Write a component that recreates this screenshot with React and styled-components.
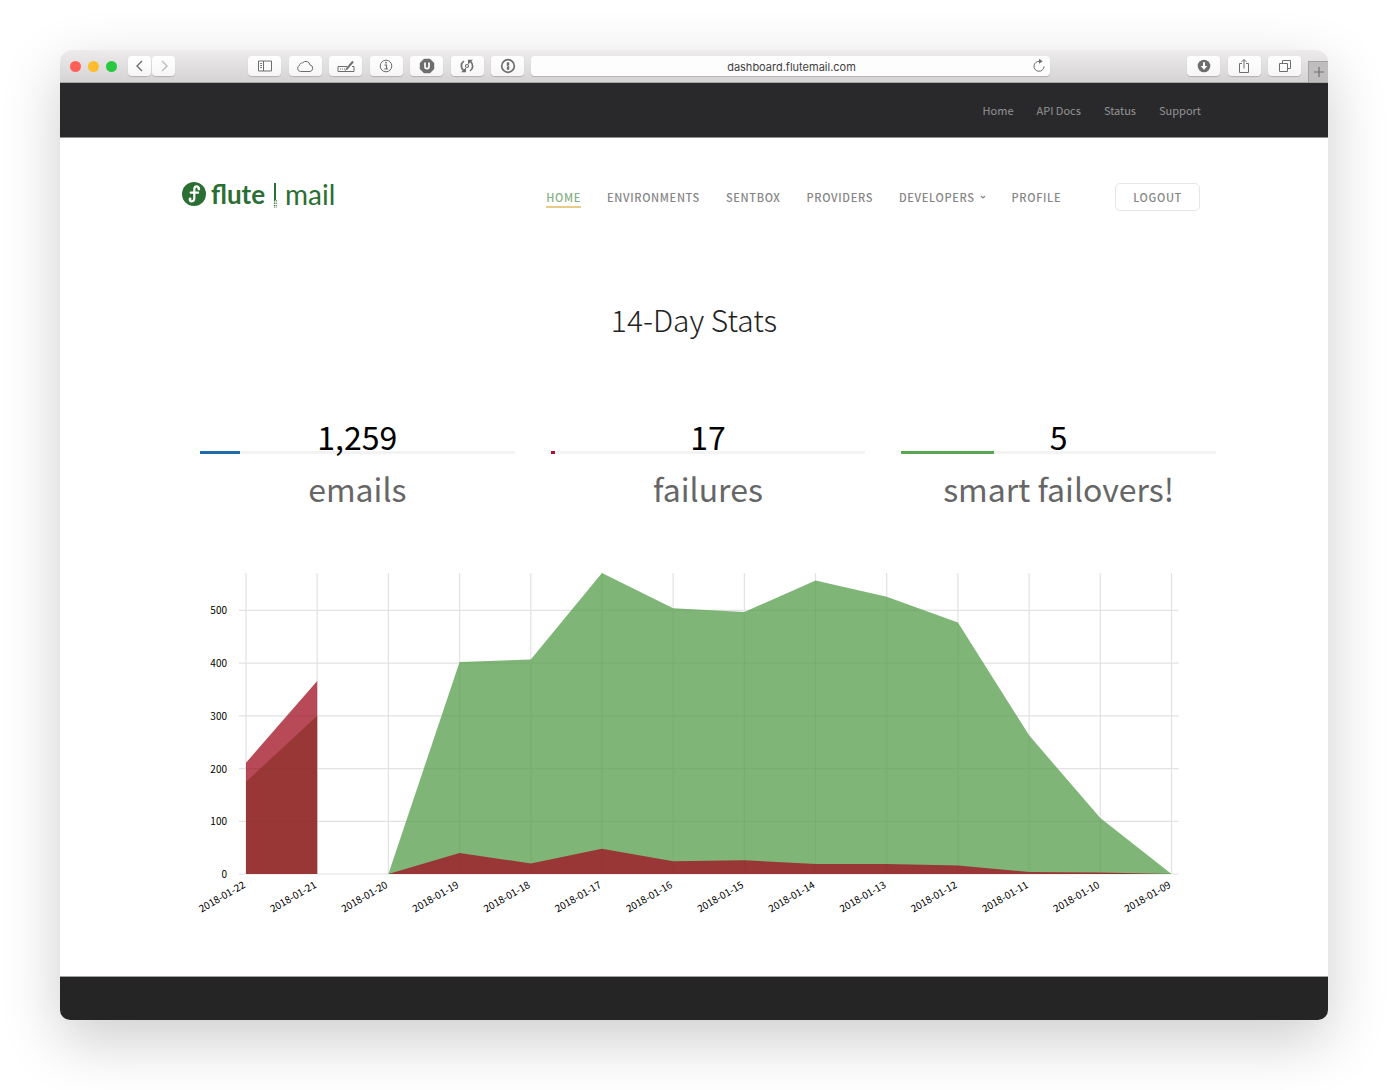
import React from "react";
import styled, { createGlobalStyle } from "styled-components";

const sans = `"Noto Sans CJK SC", "Noto Sans", sans-serif`;

const GlobalStyle = createGlobalStyle`
  *, *::before, *::after { box-sizing: border-box; }
  body { margin: 0; background: #fff; font-family: ${sans}; color: #222; }
  a { color: inherit; text-decoration: none; }
  button, input { font: inherit; color: inherit; margin: 0; }
`;

const Desktop = styled.div`
  padding: 50px 60px 70px;
`;

const Window = styled.div`
  border-radius: 12px 12px 10px 10px;
  overflow: hidden;
  background: #fff;
  box-shadow: 0 20px 60px rgba(0, 0, 0, 0.2);
`;

const Toolbar = styled.div`
  display: flex;
  align-items: center;
  height: 33px;
  padding-left: 10px;
  border-bottom: 1px solid #a3a9a5;
  background: linear-gradient(#edebec, #d5d3d4);
`;

const Lights = styled.div`
  display: flex;
  gap: 7px;
  margin-right: 11px;
`;

const Light = styled.span`
  width: 11px;
  height: 11px;
  border-radius: 50%;
  background: ${(p) => p.$color};
`;

const ToolButton = styled.button`
  display: flex;
  align-items: center;
  justify-content: center;
  width: ${(p) => (p.$narrow ? "23px" : "33px")};
  height: 20px;
  padding: 0;
  border: 0;
  border-radius: 4px;
  background: linear-gradient(#fff, #f6f6f6);
  box-shadow: 0 1px 1px rgba(0, 0, 0, 0.18);
  color: ${(p) => (p.$faded ? "#bdbdbd" : "#6e6e6e")};
`;

const History = styled.div`
  display: flex;
  gap: 1px;
  margin-right: 73px;
`;

const ToolGroup = styled.div`
  display: flex;
  justify-content: space-between;
  width: ${(p) => p.$width};
`;

const AddressBar = styled.form`
  display: flex;
  flex: 1;
  min-width: 120px;
  height: 20px;
  margin: 0 137px 0 7px;
  border-radius: 4px;
  background: #fdfdfd;
  box-shadow: 0 1px 1px rgba(0, 0, 0, 0.18);
`;

const Address = styled.input`
  flex: 1;
  min-width: 0;
  height: 20px;
  padding: 1px 0 0 24px;
  border: 0;
  background: transparent;
  font: 11px/20px Inter, sans-serif;
  text-align: center;
  color: #3f3f3f;
`;

const Reload = styled.button`
  display: flex;
  align-items: center;
  justify-content: center;
  width: 22px;
  padding: 0;
  border: 0;
  background: transparent;
  color: #6e6e6e;
`;

const NewTab = styled.button`
  display: flex;
  align-items: center;
  justify-content: center;
  align-self: flex-end;
  width: 20px;
  height: 21px;
  margin-left: 7px;
  padding: 0;
  border: 1px solid #a5a3a4;
  border-width: 1px 0 0 1px;
  background: #bfbdbe;
  color: #737172;
`;

const UtilityBar = styled.nav`
  display: flex;
  justify-content: flex-end;
  align-items: center;
  gap: 23px;
  height: 55px;
  padding-right: 127px;
  border-bottom: 1px solid #8f8f90;
  background: #29292b;
  font-size: 11px;
  line-height: 18px;
  color: #949494;
`;

const Header = styled.header`
  display: flex;
  align-items: center;
  justify-content: space-between;
  padding: 40px 128px 38px 122px;
`;

const Logo = styled.a`
  display: flex;
  align-items: center;
  gap: 5px;
  height: 32px;
  margin-bottom: 6px;
  color: #2b6e33;
  font-family: Lato, sans-serif;
  line-height: 32px;
`;

const LogoWord = styled.span`
  font-size: ${(p) => (p.$bold ? "26px" : "28px")};
  font-weight: ${(p) => (p.$bold ? 700 : 400)};
`;

const MainNav = styled.nav`
  display: flex;
  align-items: center;
  gap: 26px;
  font-size: 11px;
  line-height: 18px;
  font-weight: 500;
  letter-spacing: 0.06em;
  color: #858585;
`;

const NavLink = styled.a`
  display: flex;
  align-items: center;
  gap: 5px;
  padding-top: 2px;
  border-bottom: 2px solid ${(p) => (p.$active ? "#e9cb88" : "transparent")};
  color: ${(p) => (p.$active ? "#86af86" : "inherit")};
`;

const Logout = styled.button`
  height: 28px;
  margin-left: 28px;
  padding: 0 17px;
  border: 1px solid #e6e6e6;
  border-radius: 5px;
  background: #fff;
  letter-spacing: inherit;
  line-height: 18px;
`;

const Title = styled.h1`
  margin: 0;
  padding-top: 41px;
  font-size: 30px;
  line-height: 48px;
  font-weight: 300;
  text-align: center;
`;

const Stats = styled.section`
  display: grid;
  grid-template-columns: repeat(3, 1fr);
  gap: 36px;
  padding: 69px 112px 0 140px;
`;

const Stat = styled.div`
  display: flex;
  flex-direction: column;
  text-align: center;
  font-size: 32px;
`;

const StatValue = styled.strong`
  position: relative;
  z-index: 1;
  margin-bottom: -9px;
  font-weight: 400;
  line-height: 48px;
  color: #000;
`;

const Track = styled.div`
  height: 3px;
  background: #f3f3f3;
`;

const Fill = styled.div`
  height: 3px;
  background: ${(p) => p.$color};
`;

const StatLabel = styled.span`
  padding-top: 10px;
  line-height: 48px;
  color: #666;
`;

const ChartSection = styled.section`
  padding: 60px 112px 44px 140px;
`;

const Chart = styled.svg`
  display: block;
  width: 100%;
  height: auto;
  overflow: visible;
  font-family: ${sans};
  font-size: 10px;
  fill: #000;
`;

const Footer = styled.footer`
  height: 44px;
  border-top: 1px solid #9da3a0;
  background: #252525;
`;

function Icon({ w = 16, h = 16, children }) {
  return (
    <svg width={w} height={h} viewBox={`0 0 ${w} ${h}`} fill="none" stroke="currentColor" aria-hidden="true">
      {children}
    </svg>
  );
}

const icons = {
  back: <Icon><path d="M10 3 5 8l5 5" strokeWidth="1.4" /></Icon>,
  forward: <Icon><path d="M6 3l5 5-5 5" strokeWidth="1.4" /></Icon>,
  sidebar: <Icon><path d="M1.5 3h13v10h-13zM6.5 3v10" /><path d="M3 5.5h2M3 7.5h2M3 9.5h2" strokeWidth=".9" /></Icon>,
  cloud: <Icon w={18}><path d="M4.5 13.5A3.200 3.200 0 0 1 3.500 7.400 2.500 2.500 0 0 1 6.500 5 4.200 4.200 0 0 1 14 7 3.300 3.300 0 0 1 14 13.500z" /></Icon>,
  write: <Icon w={20}><path d="M11 8.500H2v5h16v-5h-2" /><path d="M4 11h5" strokeDasharray="1 1" /><path d="M10.500 11.200 17 3.500" strokeWidth="2" /><path d="m8.800 12.500 2-1.200" /></Icon>,
  info: <Icon><circle cx="8" cy="8" r="5.800" /><path d="M6.500 7h2v4M6.300 11h3.600" strokeWidth="1.200" /><circle cx="8" cy="4.700" r=".9" fill="currentColor" stroke="none" /></Icon>,
  shield: <Icon><path d="M5 .8h6L15.200 5v6L11 15.200H5L.8 11V5z" fill="currentColor" stroke="none" /><path d="M6 4.500v4.600q0 1.600 2 1.600t2-1.600V4.500" stroke="#fff" strokeWidth="1.700" /></Icon>,
  sync: (
    <Icon>
      <path d="M5 3.100A5.600 5.600 0 0 0 4.500 12.300M11 12.900A5.600 5.600 0 0 0 11.500 3.700" strokeWidth="1.700" />
      <path d="M2 14.300h5V9.500zM14 1.700H9v4.800z" fill="currentColor" stroke="none" />
      <circle cx="8" cy="8" r="1.500" strokeWidth="1.100" />
    </Icon>
  ),
  key: <Icon><circle cx="8" cy="8" r="6.300" strokeWidth="1.700" /><path d="M8 4.300v7.400" strokeWidth="2.400" /><path d="M6.500 8.500h1M8.500 7.500h1" stroke="#fff" /></Icon>,
  download: <Icon><circle cx="8" cy="8" r="6.300" fill="currentColor" stroke="none" /><path d="M8 4.200v5" stroke="#fff" strokeWidth="2" /><path d="M4.700 8h6.600L8 11.800z" fill="#fff" stroke="none" /></Icon>,
  share: <Icon><path d="M6 5.500H3.500v9h9v-9H10M8 10.500V1.500M5.500 4 8 1.500 10.500 4" /></Icon>,
  tabs: <Icon><path d="M2.500 5.500h8v8h-8z" /><path d="M5.500 5.500v-3h8v8h-3" /></Icon>,
  plus: <Icon w={12} h={12}><path d="M6 1v10M1 6h10" strokeWidth="1.200" /></Icon>,
  reload: <Icon><path d="M8.500 3.300A5 5 0 1 0 13 8.300" /><path d="M8 .8 11.700 3.300 8 5.800z" fill="currentColor" stroke="none" /></Icon>,
};

const extensions = [
  ["Show sidebar", "sidebar"],
  ["iCloud tabs", "cloud"],
  ["AutoFill", "write"],
  ["Page info", "info"],
  ["Content blocker", "shield"],
  ["Sync", "sync"],
  ["Passwords", "key"],
];

const actions = [
  ["Downloads", "download"],
  ["Share", "share"],
  ["Show all tabs", "tabs"],
];

const stats = [
  { value: "1,259", label: "emails", share: 12.6, color: "#1f6bab" },
  { value: "17", label: "failures", share: 1.3, color: "#ab0f32" },
  { value: "5", label: "smart failovers!", share: 29.4, color: "#58a651" },
];

const days = [
  { date: "2018-01-22", emails: 175, failures: 211 },
  { date: "2018-01-21", emails: 300, failures: 366 },
  { date: "2018-01-20", emails: 0, failures: 0 },
  { date: "2018-01-19", emails: 402, failures: 40 },
  { date: "2018-01-18", emails: 407, failures: 20 },
  { date: "2018-01-17", emails: 571, failures: 48 },
  { date: "2018-01-16", emails: 504, failures: 24 },
  { date: "2018-01-15", emails: 497, failures: 26 },
  { date: "2018-01-14", emails: 557, failures: 19 },
  { date: "2018-01-13", emails: 526, failures: 19 },
  { date: "2018-01-12", emails: 477, failures: 16 },
  { date: "2018-01-11", emails: 263, failures: 4 },
  { date: "2018-01-10", emails: 106, failures: 3 },
  { date: "2018-01-09", emails: 0, failures: 0 },
];

const plot = { left: 46, right: 971.5, top: 1, bottom: 302, max: 571 };
const xAt = (i) => plot.left + ((plot.right - plot.left) * i) / (days.length - 1);
const yAt = (v) => plot.bottom - ((plot.bottom - plot.top) * v) / plot.max;

function areaPath(key, from, to) {
  const points = days.slice(from, to + 1).map((d, i) => `${xAt(from + i)},${yAt(d[key])}`);
  return `M${xAt(from)},${plot.bottom}L${points.join("L")}L${xAt(to)},${plot.bottom}Z`;
}

function StatsChart() {
  return (
    <Chart viewBox="0 0 1016 360" role="img" aria-label="Emails and failures per day">
      <g stroke="#e2e2e2" strokeWidth="1.2">
        {days.map((d, i) => (
          <line key={d.date} x1={xAt(i)} x2={xAt(i)} y1={plot.top} y2={plot.bottom} />
        ))}
        {[0, 100, 200, 300, 400, 500].map((v) => (
          <line key={v} x1={plot.left - 7} x2={plot.right + 7} y1={yAt(v)} y2={yAt(v)} />
        ))}
      </g>
      {["emails", "failures"].map((key) => (
        <g key={key} fill={key === "emails" ? "#549c4a" : "#a00d20"} fillOpacity="0.75">
          <path d={areaPath(key, 0, 1)} />
          <path d={areaPath(key, 2, 13)} />
        </g>
      ))}
      {[0, 100, 200, 300, 400, 500].map((v) => (
        <text key={v} x="27" y={yAt(v) + 4} textAnchor="end">{v}</text>
      ))}
      {days.map((d, i) => (
        <text key={d.date} textAnchor="end" transform={`translate(${xAt(i)} ${plot.bottom + 13}) rotate(-30)`}>
          {d.date}
        </text>
      ))}
    </Chart>
  );
}

function LogoMark() {
  return (
    <svg width="24" height="24" viewBox="0 0 24 24" fill="none" aria-hidden="true">
      <circle cx="12" cy="12" r="12" fill="#2b6e33" />
      <g stroke="#fff" strokeWidth="2.200" strokeLinecap="round">
        <path d="M17 7C17 3.700 12.300 3.300 12.300 7.600V16C12.300 20.500 7.300 20.300 7.800 17.200" />
        <path d="M8.700 10.700h7.400" />
      </g>
      <circle cx="16.800" cy="7" r="1.400" fill="#fff" />
      <circle cx="8.100" cy="17" r="1.400" fill="#fff" />
    </svg>
  );
}

function LogoDivider() {
  return (
    <svg width="10" height="28" viewBox="0 0 10 28" fill="none" stroke="#2b6e33" aria-hidden="true">
      <path d="M5 3v17" strokeWidth="2" />
      <path d="M4.400 20v8M6.200 20v8" strokeWidth="1" strokeDasharray="1.5 1" />
    </svg>
  );
}

export default function App() {
  return (
    <>
      <GlobalStyle />
      <Desktop>
        <Window>
          <Toolbar>
            <Lights>
              <Light $color="#ff5f57" />
              <Light $color="#ffbd2e" />
              <Light $color="#28c940" />
            </Lights>
            <History>
              <ToolButton $narrow aria-label="Back">{icons.back}</ToolButton>
              <ToolButton $narrow $faded aria-label="Forward">{icons.forward}</ToolButton>
            </History>
            <ToolGroup $width="276px">
              {extensions.map(([label, icon]) => (
                <ToolButton key={icon} aria-label={label}>{icons[icon]}</ToolButton>
              ))}
            </ToolGroup>
            <AddressBar onSubmit={(e) => e.preventDefault()}>
              <Address aria-label="Address" defaultValue="dashboard.flutemail.com" />
              <Reload type="button" aria-label="Reload">{icons.reload}</Reload>
            </AddressBar>
            <ToolGroup $width="114px">
              {actions.map(([label, icon]) => (
                <ToolButton key={icon} aria-label={label}>{icons[icon]}</ToolButton>
              ))}
            </ToolGroup>
            <NewTab aria-label="New tab">{icons.plus}</NewTab>
          </Toolbar>
          <UtilityBar>
            <a href="#home">Home</a>
            <a href="#docs">API Docs</a>
            <a href="#status">Status</a>
            <a href="#support">Support</a>
          </UtilityBar>
          <Header>
            <Logo href="#home">
              <LogoMark />
              <LogoWord $bold>flute</LogoWord>
              <LogoDivider />
              <LogoWord>mail</LogoWord>
            </Logo>
            <MainNav>
              <NavLink href="#home" $active>HOME</NavLink>
              <NavLink href="#environments">ENVIRONMENTS</NavLink>
              <NavLink href="#sentbox">SENTBOX</NavLink>
              <NavLink href="#providers">PROVIDERS</NavLink>
              <NavLink href="#developers">
                DEVELOPERS
                <Icon w={6} h={6}><path d="M1 2l2 2 2-2" strokeWidth="1.200" /></Icon>
              </NavLink>
              <NavLink href="#profile">PROFILE</NavLink>
              <Logout>LOGOUT</Logout>
            </MainNav>
          </Header>
          <main>
            <Title>14-Day Stats</Title>
            <Stats>
              {stats.map((s) => (
                <Stat key={s.label}>
                  <StatValue>{s.value}</StatValue>
                  <Track>
                    <Fill $color={s.color} style={{ width: `${s.share}%` }} />
                  </Track>
                  <StatLabel>{s.label}</StatLabel>
                </Stat>
              ))}
            </Stats>
            <ChartSection>
              <StatsChart />
            </ChartSection>
          </main>
          <Footer />
        </Window>
      </Desktop>
    </>
  );
}
